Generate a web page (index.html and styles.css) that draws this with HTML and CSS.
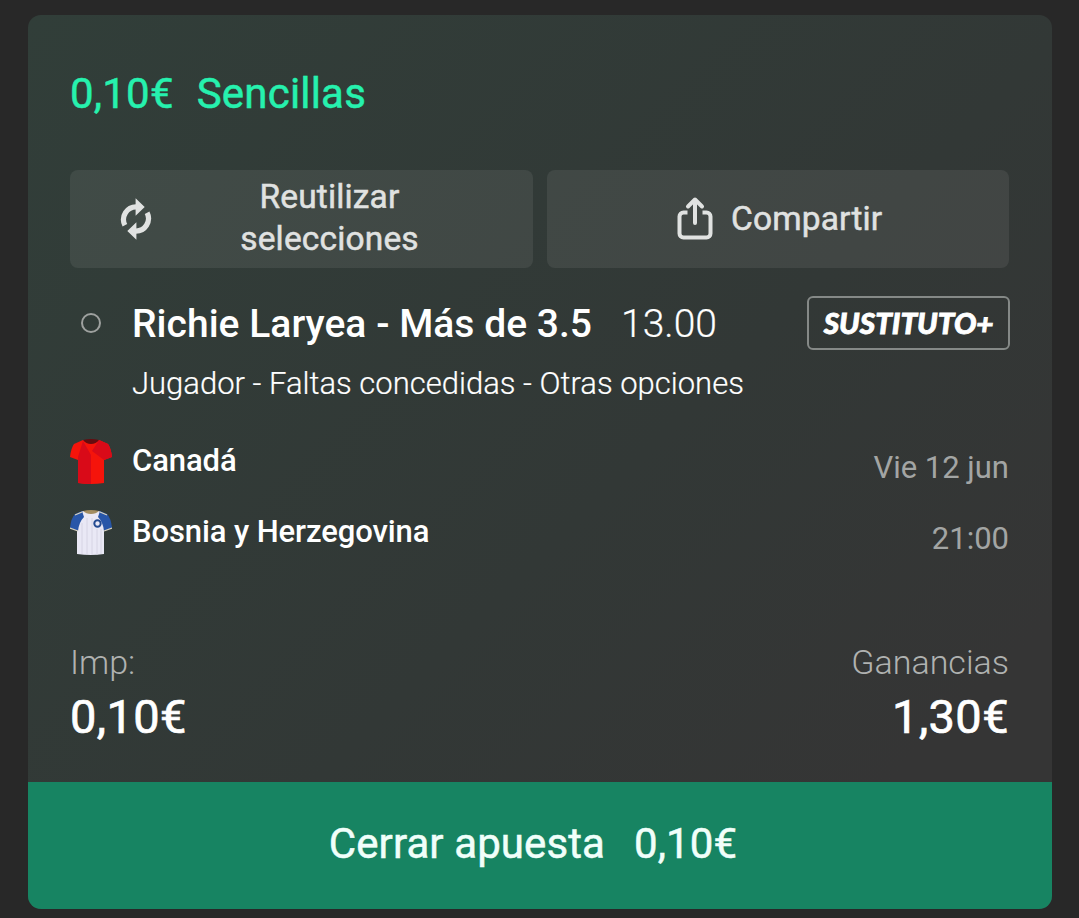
FILE: index.html
```html
<!DOCTYPE html>
<html lang="es">
<head>
<meta charset="utf-8">
<title>Mis apuestas</title>
<link rel="stylesheet" href="styles.css">
</head>
<body>
<article class="card">
  <div class="content">
    <h1 class="title"><span>0,10€</span><span>Sencillas</span></h1>
    <div class="actions">
      <button class="action reuse">
        <svg class="reuse-icon" viewBox="0 0 32 42"><g fill="none" stroke="currentColor" stroke-width="5.2"><path d="M4.9 27.2A12.6 12.6 0 0 1 16.5 8.9"/><path d="M27.1 14.8A12.6 12.6 0 0 1 15.5 33.1"/></g><path fill="currentColor" d="M15.6 .3 24.7 9 15.6 17.7ZM16.4 24.3 7.3 33 16.4 41.7Z"/></svg>
        <span class="reuse-label">Reutilizar<br>selecciones</span>
      </button>
      <button class="action share">
        <svg class="share-icon" viewBox="0 0 36 44" fill="none" stroke="currentColor" stroke-width="4" stroke-linecap="round" stroke-linejoin="round"><path d="M10.5 16.5H6.5a4 4 0 0 0-4 4v17a4 4 0 0 0 4 4h23a4 4 0 0 0 4-4v-17a4 4 0 0 0-4-4h-4" stroke-linecap="butt"/><path d="M18 27V3.5M11 10.5l7-7 7 7"/></svg>
        <span class="share-label">Compartir</span>
      </button>
    </div>
    <div class="selection">
      <i class="ring"></i>
      <span class="pick">Richie Laryea - Más de 3.5</span>
      <span class="odds">13.00</span>
      <span class="badge"><span class="badge-label">SUSTITUTO+</span></span>
    </div>
    <p class="market">Jugador - Faltas concedidas - Otras opciones</p>
    <div class="team-row">
      <svg class="shirt" viewBox="0 0 42 46"><path fill="#f5140b" d="M13 1 4 5Q1 9 0 18l8 3V44q13 2 26 0V21l8-3Q41 9 38 5L29 1Z"/><path fill="#d90a18" d="m13 2 8 14V45q-7 0-13-1V18ZM29 1l9 4q3 4 4 13l-8 3-12-9Z"/><path fill="#650c10" d="M13 1q8-2 16 0-3 4-8 4t-8-4Z"/></svg>
      <span class="team canada">Canadá</span>
      <time class="when date">Vie 12 jun</time>
    </div>
    <div class="team-row">
      <svg class="shirt" viewBox="0 0 42 46"><path fill="#e9e8f5" d="M13 1 7 4v40q14 2 27 0V4L29 1Z"/><path fill="#2856a8" d="M12 1 5 4Q1 8 0 18l8 3q1-9 6-14ZM30 1l7 3q4 4 5 14l-8 3q-1-9-6-14Z"/><path fill="none" stroke="#d8d1be" stroke-width="1.2" d="m0 18 8 3M42 18l-8 3M12 2 5 5M30 2l7 3"/><path fill="none" stroke="#d0cfe0" stroke-width=".8" d="M12 13v31M17 8v37M22 8v37M27 19v26M31 19v25"/><path fill="#a38d61" d="M13 1q8-2 16 0-3 3-8 3t-8-3Z"/><circle cx="27.5" cy="13.5" r="3.2" fill="#e9e8f5" stroke="#244b91" stroke-width="2"/></svg>
      <span class="team bosnia">Bosnia y Herzegovina</span>
      <time class="when hour">21:00</time>
    </div>
    <dl class="totals">
      <div><dt class="stake-label">Imp:</dt><dd class="stake">0,10€</dd></div>
      <div class="returns"><dt class="returns-label">Ganancias</dt><dd class="return">1,30€</dd></div>
    </dl>
  </div>
  <button class="cashout"><span>Cerrar apuesta</span><span>0,10€</span></button>
</article>
</body>
</html>
```
FILE: styles.css
```css
* { box-sizing: border-box; }
body {
  margin: 0;
  height: 918px;
  padding: 15px 27px 9px 28px;
  background: #282828;
  color: #fff;
  font-family: Roboto, sans-serif;
  overflow: hidden;
}
button { border: 0; padding: 0; font: inherit; color: inherit; }
svg { display: block; flex: none; }
span, time, dt, dd, p { white-space: nowrap; }
.title, .action, .cashout { font-weight: 400; -webkit-text-stroke: .5px currentColor; }
.card {
  height: 894px;
  border-radius: 13px;
  overflow: hidden;
  background: linear-gradient(135deg, #313e39 0%, #323836 55%, #353535 85%);
}
.content { height: 767px; padding: 53px 42px 0; }
.title {
  display: flex;
  gap: 23px;
  margin: 0;
  height: 52px;
  font-size: 42px;
  line-height: 52px;
  letter-spacing: .2px;
  color: #26f1ae;
}
.actions { display: grid; grid-template-columns: 463px 462px; gap: 14px; margin-top: 50px; }
.action {
  display: flex;
  align-items: center;
  height: 98px;
  border-radius: 8px;
  background: rgba(255, 255, 255, .075);
  color: #e0e2e1;
  font-size: 33.5px;
  line-height: 42px;
  letter-spacing: .15px;
}
.reuse { padding-left: 50px; }
.reuse-icon { width: 32px; height: 42px; }
.reuse-label { width: 355px; text-align: center; padding-bottom: 2px; }
.share { padding-left: 130px; gap: 18px; }
.share-icon { width: 36px; height: 44px; margin-top: -3px; }
.share-label { padding-bottom: 1px; }
.selection { display: flex; align-items: center; height: 54px; margin-top: 28px; }
.ring { width: 20px; height: 20px; margin: 0 31px 0 11px; border: 2px solid #9ea19f; border-radius: 50%; }
.pick, .odds { padding-top: 2px; font-size: 39px; }
.pick { font-weight: 500; letter-spacing: .03px; }
.odds { margin-left: 29px; font-weight: 300; -webkit-text-stroke: .2px #fff; }
.badge {
  display: flex;
  align-items: center;
  justify-content: center;
  width: 203px;
  height: 54px;
  margin-left: auto;
  border: 2px solid #858987;
  border-radius: 6px;
}
.badge-label {
  font: italic 900 27.5px Lato, sans-serif;
  -webkit-text-stroke: .8px #fff;
  transform: scaleX(1.08);
}
.market { margin: 13px 0 0 62px; height: 42px; font-size: 31px; font-weight: 300; line-height: 42px; -webkit-text-stroke: .2px #fff; }
.team-row { display: flex; align-items: flex-start; height: 71px; line-height: 42px; font-size: 31px; }
.market + .team-row { margin-top: 34px; }
.shirt { width: 42px; height: 46px; margin-right: 20px; }
.team { font-weight: 500; padding-top: 1px; letter-spacing: -.1px; }
.when { margin: 8px 1px 0 auto; color: #a3a5a4; }
.totals { display: flex; justify-content: space-between; margin: 58px 0 0; }
.totals dt { height: 47px; font-size: 34px; font-weight: 300; line-height: 47px; color: #b0b2b1; }
.totals dd { height: 60px; margin: 0; font-size: 47px; font-weight: 400; line-height: 61px; letter-spacing: .4px; -webkit-text-stroke: .7px #fff; }
.returns { text-align: right; padding-right: 1px; }
.cashout {
  display: flex;
  justify-content: center;
  gap: 29px;
  width: 100%;
  height: 127px;
  padding-right: 14px;
  background: #178462;
  color: #f0fffa;
  font-size: 42px;
  letter-spacing: .1px;
  line-height: 124px;
}
```
